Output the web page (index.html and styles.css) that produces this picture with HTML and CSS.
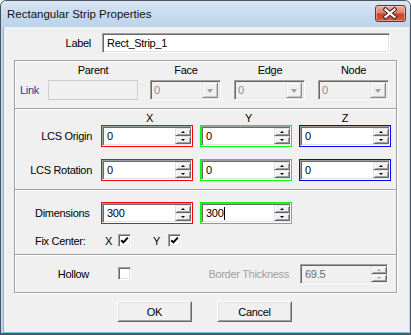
FILE: index.html
```html
<!DOCTYPE html>
<html>
<head>
<meta charset="utf-8">
<title>Rectangular Strip Properties</title>
<link rel="stylesheet" href="styles.css">
</head>
<body>
<div class="window">
  <div class="titlebar">
    <span class="title">Rectangular Strip Properties</span>
    <div class="close-btn">
      <svg width="29" height="15" viewBox="0 0 29 15">
        <path d="M9.5 3.5 L18.5 11 M18.5 3.5 L9.5 11" stroke="#4a2020" stroke-width="4.2" stroke-linecap="square" fill="none"/>
        <path d="M9.5 3.5 L18.5 11 M18.5 3.5 L9.5 11" stroke="#ffffff" stroke-width="2.2" stroke-linecap="square" fill="none"/>
      </svg>
    </div>
  </div>
  <div class="client">
    <div class="label-row">
      <span class="row-label">Label</span>
      <div class="edit label-edit"><span class="txt">Rect_Strip_1</span></div>
    </div>

    <div class="group link-group">
      <div class="link-grid">
        <span></span>
        <span class="hdr">Parent</span>
        <span class="hdr">Face</span>
        <span class="hdr">Edge</span>
        <span class="hdr">Node</span>
      </div>
      <div class="link-grid link-fields">
        <span class="link-label">Link</span>
        <div class="edit-disabled"></div>
        <div class="combo"><span class="combo-txt">0</span><span class="combo-btn"></span></div>
        <div class="combo"><span class="combo-txt">0</span><span class="combo-btn"></span></div>
        <div class="combo combo-last"><span class="combo-txt">0</span><span class="combo-btn"></span></div>
      </div>
    </div>

    <div class="group lcs-group">
      <div class="vgrid hdr-row">
        <span></span>
        <span class="hdr hdr-shift">X</span>
        <span class="hdr hdr-shift">Y</span>
        <span class="hdr">Z</span>
      </div>
      <div class="vgrid">
        <span class="row-label">LCS Origin</span>
        <div class="vbox red"><div class="edit spin-edit"><span class="txt">0</span><div class="spinner"><span class="spin up"></span><span class="spin down"></span></div></div></div>
        <div class="vbox green"><div class="edit spin-edit"><span class="txt">0</span><div class="spinner"><span class="spin up"></span><span class="spin down"></span></div></div></div>
        <div class="vbox blue"><div class="edit spin-edit"><span class="txt">0</span><div class="spinner"><span class="spin up"></span><span class="spin down"></span></div></div></div>
      </div>
      <div class="vgrid rot-row">
        <span class="row-label">LCS Rotation</span>
        <div class="vbox red"><div class="edit spin-edit"><span class="txt">0</span><div class="spinner"><span class="spin up"></span><span class="spin down"></span></div></div></div>
        <div class="vbox green"><div class="edit spin-edit"><span class="txt">0</span><div class="spinner"><span class="spin up"></span><span class="spin down"></span></div></div></div>
        <div class="vbox blue"><div class="edit spin-edit"><span class="txt">0</span><div class="spinner"><span class="spin up"></span><span class="spin down"></span></div></div></div>
      </div>
    </div>

    <div class="group dim-group">
      <div class="vgrid">
        <span class="left-label">Dimensions</span>
        <div class="vbox red"><div class="edit spin-edit"><span class="txt">300</span><div class="spinner"><span class="spin up"></span><span class="spin down"></span></div></div></div>
        <div class="vbox green"><div class="edit spin-edit"><span class="txt">300</span><span class="caret"></span><div class="spinner"><span class="spin up"></span><span class="spin down"></span></div></div></div>
      </div>
      <div class="vgrid fix-row">
        <span class="left-label">Fix Center:</span>
        <div class="fix-items">
          <span class="axis-x">X</span>
          <span class="checkbox checked"><svg width="9" height="9" viewBox="0 0 9 9"><polyline points="1.2,4.2 3.4,6.4 7.8,1.6" fill="none" stroke="#000" stroke-width="2"/></svg></span>
          <span class="axis-y">Y</span>
          <span class="checkbox checked"><svg width="9" height="9" viewBox="0 0 9 9"><polyline points="1.2,4.2 3.4,6.4 7.8,1.6" fill="none" stroke="#000" stroke-width="2"/></svg></span>
        </div>
      </div>
    </div>

    <div class="group hollow-group">
      <span class="hollow-label">Hollow</span>
      <span class="checkbox hollow-cb"></span>
      <span class="spacer"></span>
      <span class="disabled-label">Border Thickness</span>
      <div class="edit disabled-edit"><span class="txt">69.5</span><div class="spinner dis"><span class="spin up"></span><span class="spin down"></span></div></div>
    </div>

    <div class="buttons">
      <div class="btn">OK</div>
      <div class="btn">Cancel</div>
    </div>
  </div>
</div>
</body>
</html>
```

FILE: styles.css
```css
* { box-sizing: border-box; }
html, body { margin: 0; padding: 0; }
body {
  width: 411px;
  height: 335px;
  overflow: hidden;
  background: #ffffff;
  font-family: "Liberation Sans", Arial, sans-serif;
  font-size: 11px;
  letter-spacing: -0.3px;
  color: #000;
}

.window {
  width: 411px;
  height: 335px;
  border: 1px solid #4c5663;
  border-bottom-width: 2px;
  border-radius: 6px 6px 0 0;
  background: #bed4eb;
  display: flex;
  flex-direction: column;
  overflow: hidden;
}

.titlebar {
  height: 26px;
  flex: none;
  display: flex;
  align-items: flex-start;
  justify-content: space-between;
  padding: 0 4px 0 6px;
  background: linear-gradient(#dae6f3, #c7daee 55%, #bcd3ea);
}
.title {
  font-size: 11.5px;
  letter-spacing: 0;
  line-height: 14px;
  margin-top: 6px;
  color: #111;
}
.close-btn {
  width: 31px;
  height: 17px;
  margin-top: 4px;
  border: 1px solid #7a2d22;
  border-radius: 3px;
  background: linear-gradient(#eab0a2, #dc7e6a 45%, #c7452d 55%, #cf5b40);
  box-shadow: inset 0 0 0 1px rgba(255, 220, 210, 0.45);
  display: flex;
  align-items: center;
  justify-content: center;
}

.client {
  flex: 1;
  margin: 0 1px 0 2px;
  border-left: 1px solid #9db1c9;
  border-bottom: 1px solid #6cc4e4;
  background: #f0f0f0;
  padding: 6px 12px 0 10px;
  display: flex;
  flex-direction: column;
}

/* Label row */
.label-row {
  display: flex;
  align-items: center;
  height: 20px;
  gap: 10px;
}
.row-label {
  width: 78px;
  text-align: right;
  padding-right: 1px;
  white-space: nowrap;
}

/* Sunken edit */
.edit {
  height: 20px;
  background: #fff;
  border: 1px solid;
  border-color: #a0a0a0 #ffffff #ffffff #a0a0a0;
  box-shadow: inset 1px 1px #696969, inset -1px -1px #e3e3e3;
  display: flex;
  align-items: center;
  padding-left: 4px;
  white-space: nowrap;
  overflow: hidden;
}
.label-edit { width: 288px; }
.txt { line-height: 14px; }

/* Group boxes */
.group {
  width: 383px;
  border: 1px solid #a0a0a0;
  box-shadow: inset 1px 1px #fff, 1px 1px #fff;
  flex: none;
}
.group + .group { margin-top: -1px; }

.link-group {
  margin-top: 7px;
  height: 49px;
  padding: 3px 0 0 5px;
  display: flex;
  flex-direction: column;
  gap: 3px;
}
.link-grid {
  display: grid;
  grid-template-columns: 16px 90px 72px 72px 71px;
  column-gap: 12px;
  align-items: center;
}
.hdr { text-align: center; line-height: 13px; white-space: nowrap; }
.link-fields { height: 20px; }
.link-label { color: #1d3f93; white-space: nowrap; }
.edit-disabled {
  height: 20px;
  border: 1px solid #cdcdcd;
  background: #f0f0f0;
}
.combo {
  width: 71px;
  height: 20px;
  border: 1px solid;
  border-color: #a0a0a0 #ffffff #ffffff #a0a0a0;
  box-shadow: inset 1px 1px #696969, inset -1px -1px #e3e3e3;
  background: #f0f0f0;
  display: flex;
  align-items: center;
  padding: 2px 2px 2px 3px;
}
.combo-txt { flex: 1; color: #8a8a9a; line-height: 14px; }
.combo-btn {
  width: 16px;
  height: 16px;
  background: #f0f0f0;
  border: 1px solid;
  border-color: #e3e3e3 #8c8c8c #8c8c8c #e3e3e3;
  box-shadow: inset 1px 1px #fff, inset -1px -1px #c8c8c8;
  display: flex;
  align-items: center;
  justify-content: center;
}
.combo-btn::after {
  content: "";
  border-left: 3.5px solid transparent;
  border-right: 3.5px solid transparent;
  border-top: 4px solid #a0a0a0;
  margin-top: 1px;
}

/* LCS group */
.lcs-group {
  height: 82px;
  padding: 3px 0 0 0;
  display: flex;
  flex-direction: column;
}
.vgrid {
  display: grid;
  grid-template-columns: 79px 92px 92px 92px;
  column-gap: 7px;
  align-items: center;
}
.vgrid .row-label { width: auto; padding-right: 2px; }
.hdr-row { height: 13px; }
.hdr-shift { padding-left: 5px; }
.rot-row { margin-top: 12px; }

.vbox {
  height: 22px;
  border: 1px solid;
}
.vbox.red { border-color: #ff0000; }
.vbox.green { border-color: #00ff00; }
.vbox.blue { border-color: #0000ff; }
.spin-edit { padding-right: 0; position: relative; }
.spin-edit .txt { flex: none; }
.spinner {
  margin-left: auto;
  width: 16px;
  height: 16px;
  display: flex;
  flex-direction: column;
  flex: none;
}
.spin {
  flex: 1;
  background: #f0f0f0;
  border: 1px solid;
  border-color: #e3e3e3 #696969 #696969 #e3e3e3;
  box-shadow: inset 1px 1px #fff, inset -1px -1px #a0a0a0;
  display: flex;
  align-items: center;
  justify-content: center;
}
.spin.up::after {
  content: "";
  border-left: 2px solid transparent;
  border-right: 2px solid transparent;
  border-bottom: 2px solid #000;
}
.spin.down::after {
  content: "";
  border-left: 2px solid transparent;
  border-right: 2px solid transparent;
  border-top: 2px solid #000;
}
.spinner.dis .spin.up::after { border-bottom-color: #a0a0a0; }
.spinner.dis .spin.down::after { border-top-color: #a0a0a0; }
.caret {
  width: 1px;
  height: 13px;
  background: #000;
  margin-left: 1px;
}

/* Dimensions group */
.dim-group {
  height: 66px;
  padding-top: 12px;
  display: flex;
  flex-direction: column;
}
.left-label { padding-left: 20px; white-space: nowrap; }
.fix-row { margin-top: 10px; height: 13px; }
.fix-items {
  grid-column: 2 / 5;
  display: flex;
  align-items: center;
  padding-left: 4px;
}
.axis-x { width: 13px; }
.axis-y { width: 15px; margin-left: 22px; }
.checkbox {
  width: 13px;
  height: 13px;
  background: #fff;
  border: 1px solid;
  border-color: #a0a0a0 #ffffff #ffffff #a0a0a0;
  box-shadow: inset 1px 1px #696969, inset -1px -1px #e3e3e3;
  display: flex;
  align-items: center;
  justify-content: center;
  flex: none;
}
.checkbox svg { display: block; margin-left: 0; }

/* Hollow group */
.hollow-group {
  height: 39px;
  padding: 0 8px 0 0;
  display: flex;
  align-items: center;
}
.hollow-label {
  width: 79px;
  text-align: right;
  padding-right: 5px;
}
.hollow-cb { margin-left: 24px; }
.spacer { flex: 1; }
.disabled-label { color: #a0a0a0; margin-right: 11px; white-space: nowrap; }
.disabled-edit {
  width: 88px;
  background: #f0f0f0;
  padding-right: 0;
  color: #6d6d6d;
}

/* Buttons */
.buttons {
  display: flex;
  gap: 25px;
  margin-top: 8px;
  padding-left: 103px;
}
.btn {
  width: 75px;
  height: 21px;
  background: #f0f0f0;
  border: 1px solid;
  border-color: #ffffff #696969 #696969 #ffffff;
  box-shadow: inset 1px 1px #e3e3e3, inset -1px -1px #a0a0a0;
  display: flex;
  align-items: center;
  justify-content: center;
  line-height: 14px;
}
```
